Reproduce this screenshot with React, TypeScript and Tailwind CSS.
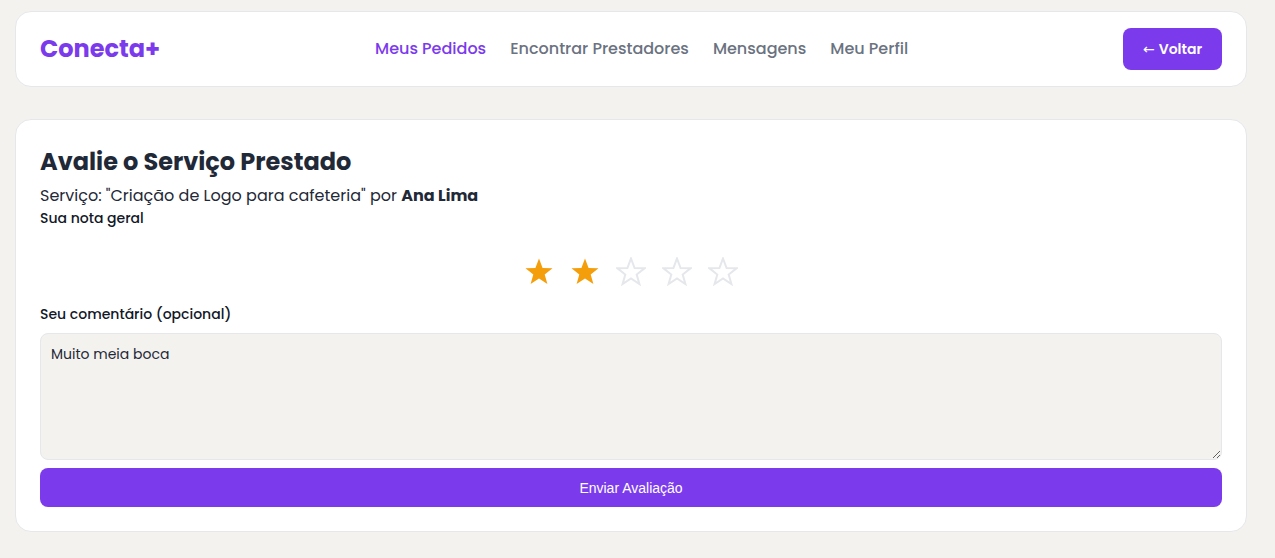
import React from "react";

const font = { fontFamily: "'Poppins', 'Open Sans', 'Noto Sans', sans-serif" };

function Star({ filled }: { filled: boolean }) {
  const pts = "15,1.5 18.6,11 28.5,11.3 20.7,17.5 23.4,27 15,21.4 6.6,27 9.3,17.5 1.5,11.3 11.4,11";
  return (
    <svg width="30" height="29" viewBox="0 0 30 29">
      {filled ? (
        <polygon points={pts} fill="#f59e0b" />
      ) : (
        <polygon points={pts} fill="none" stroke="#e5e7eb" strokeWidth="2" strokeLinejoin="miter" />
      )}
    </svg>
  );
}

export default function App() {
  return (
    <div className="min-h-[558px] bg-[#f3f2ef] pl-[15px] pr-[28px] pt-[11px] pb-6 leading-normal" style={font}>
      <header className="flex items-center justify-between rounded-2xl border border-[#e5e7eb] bg-white px-6 py-4">
        <div className="text-2xl font-bold text-[#7c3aed]">Conecta+</div>
        <nav className="flex gap-6 text-base font-medium">
          <a className="text-[#7c3aed]">Meus Pedidos</a>
          <a className="text-[#6b7280]">Encontrar Prestadores</a>
          <a className="text-[#6b7280]">Mensagens</a>
          <a className="text-[#6b7280]">Meu Perfil</a>
        </nav>
        <button className="flex h-[42px] w-[99px] items-center justify-center gap-[4px] rounded-lg bg-[#7c3aed] text-sm font-semibold text-white">
          <span className="font-normal" style={{ fontFamily: "'DejaVu Sans', sans-serif" }}>←</span>
          <span>Voltar</span>
        </button>
      </header>

      <main className="mt-8 rounded-2xl border border-[#e5e7eb] bg-white p-6">
        <h1 className="text-2xl leading-[36px] font-bold text-[#1f2937]">Avalie o Serviço Prestado</h1>
        <p className="mt-1 text-base leading-6 text-[#1f2937]">
          Serviço: "Criação de Logo para cafeteria" por <strong className="font-bold">Ana Lima</strong>
        </p>
        <div className="text-sm leading-[21px] font-medium text-[#111827]">Sua nota geral</div>
        <div className="mt-[28px] flex justify-center gap-4">
          <Star filled />
          <Star filled />
          <Star filled={false} />
          <Star filled={false} />
          <Star filled={false} />
        </div>
        <div className="mt-[18px] text-sm leading-[21px] font-medium text-[#111827]">Seu comentário (opcional)</div>
        <textarea
          className="mt-2 block h-[127px] w-full resize-y rounded-lg border border-[#e5e7eb] bg-[#f3f2ef] px-[10px] py-[10px] text-sm text-[#1f2937] outline-none"
          defaultValue="Muito meia boca"
        />
        <button
          className="mt-2 h-[39px] w-full rounded-lg bg-[#7c3aed] text-sm text-white"
          style={{ fontFamily: "'Liberation Sans', Arial, sans-serif" }}
        >
          Enviar Avaliação
        </button>
      </main>
    </div>
  );
}
